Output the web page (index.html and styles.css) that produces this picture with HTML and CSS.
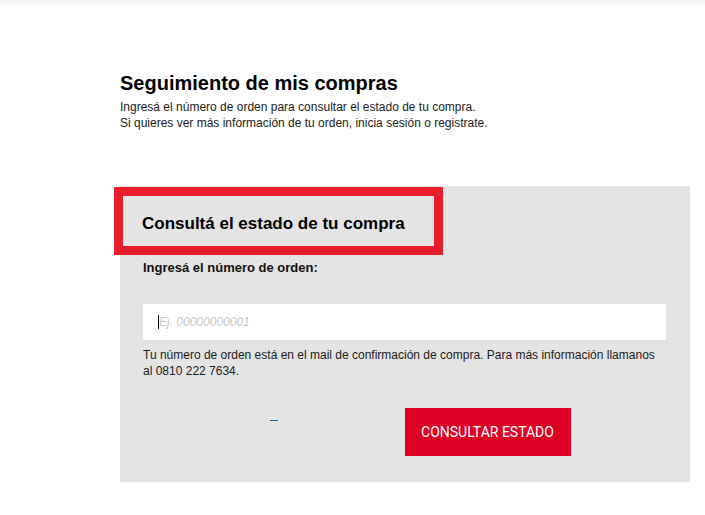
FILE: index.html
```html
<!DOCTYPE html>
<html lang="es">
<head>
<meta charset="utf-8">
<title>Seguimiento de mis compras</title>
<link rel="stylesheet" href="styles.css">
</head>
<body>
<div class="topbar"></div>
<main class="page">
  <section class="intro">
    <h1 class="intro-title">Seguimiento de mis compras</h1>
    <p class="intro-text">Ingresá el número de orden para consultar el estado de tu compra.<br>Si quieres ver más información de tu orden, inicia sesión o registrate.</p>
  </section>
  <section class="panel">
    <h2 class="panel-title">Consultá el estado de tu compra</h2>
    <label class="field-label" for="order">Ingresá el número de orden:</label>
    <div class="field">
      <input id="order" class="field-input" type="text" placeholder="Ej. 00000000001">
      <span class="caret"></span>
    </div>
    <p class="help">Tu número de orden está en el mail de confirmación de compra. Para más información llamanos al 0810 222 7634.</p>
    <div class="actions">
      <div class="link-col"><a href="#" class="link"></a></div>
      <div class="btn-col"><button class="btn" type="button">CONSULTAR ESTADO</button></div>
    </div>
  </section>
</main>
</body>
</html>
```
FILE: styles.css
```css
html, body {
  margin: 0;
  padding: 0;
  background: #ffffff;
}
body {
  font-family: "Liberation Sans", Arial, sans-serif;
  color: #111111;
}
.topbar {
  height: 8px;
  background: linear-gradient(to bottom, #f1f1f1, #ffffff);
}
.page {
  margin-left: 120px;
  width: 570px;
}
.intro-title {
  margin: 63px 0 0 0;
  font-size: 20px;
  line-height: 24px;
  font-weight: bold;
  color: #000;
}
.intro-text {
  margin: 4px 0 0 0;
  font-size: 12px;
  line-height: 16px;
  color: #222;
}
.panel {
  margin-top: 55px;
  background: #e5e4e5;
  padding: 1px 24px 26px 23px;
}
.panel-title {
  margin: 0 0 0 -29px;
  width: 292px;
  border: 9px solid #e81f2a;
  padding: 18px 0 12px 19px;
  font-size: 17px;
  line-height: 20px;
  font-weight: bold;
  color: #000;
}
.field-label {
  display: block;
  margin: 5px 0 0 0;
  font-size: 13px;
  line-height: 16px;
  font-weight: bold;
  color: #111;
}
.field {
  position: relative;
  margin-top: 28px;
}
.field-input {
  display: block;
  box-sizing: border-box;
  width: 100%;
  height: 36px;
  border: none;
  outline: none;
  background: #ffffff;
  padding: 0 0 0 16px;
  font-family: "Liberation Sans", Arial, sans-serif;
  font-size: 12px;
  color: #333;
}
.field-input::placeholder {
  color: #c9c9c9;
  font-style: italic;
}
.caret {
  position: absolute;
  left: 15px;
  top: 11px;
  width: 1px;
  height: 14px;
  background: #000;
}
.help {
  margin: 7px 0 0 0;
  width: 512px;
  font-size: 12px;
  line-height: 16px;
  color: #1a1a1a;
}
.actions {
  margin-top: 29px;
  display: grid;
  grid-template-columns: 1fr 1fr;
}
.link-col {
  display: flex;
  justify-content: center;
  align-items: flex-start;
}
.link {
  display: block;
  width: 8px;
  height: 12px;
  border-bottom: 1px solid #1f5fa8;
}
.btn-col {
  display: flex;
  justify-content: flex-start;
}
.btn {
  width: 166px;
  height: 48px;
  border: none;
  background: #de0024;
  color: #ffffff;
  font-family: Roboto, "Liberation Sans", Arial, sans-serif;
  font-size: 14px;
  padding: 0;
  cursor: pointer;
}
```
